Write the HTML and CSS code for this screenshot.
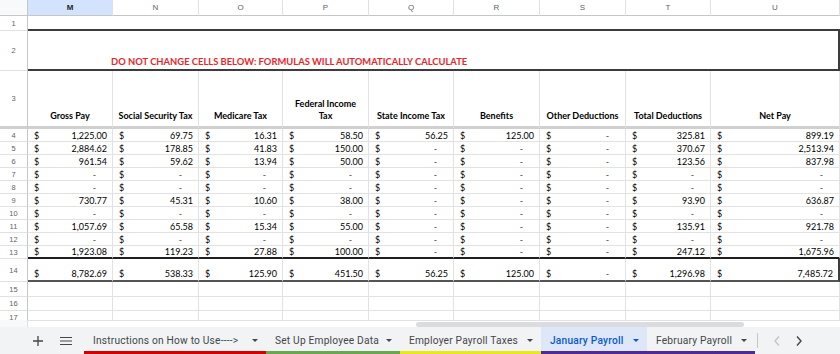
FILE: index.html
```html
<!DOCTYPE html>
<html>
<head>
<meta charset="utf-8">
<link rel="stylesheet" href="styles.css">
</head>
<body>
<div class="sheet">
  <div class="grid">
    <div class="corner"></div>
    <div class="ch sel">M</div><div class="ch">N</div><div class="ch">O</div><div class="ch">P</div><div class="ch">Q</div><div class="ch">R</div><div class="ch">S</div><div class="ch">T</div><div class="ch">U</div>

    <div class="rh">1</div><div class="c r1"></div>
    <div class="rh">2</div><div class="c r2"><span class="warn">DO NOT CHANGE CELLS BELOW: FORMULAS WILL AUTOMATICALLY CALCULATE</span></div>

    <div class="rh r3h">3</div>
    <div class="c hd">Gross Pay</div>
    <div class="c hd">Social Security Tax</div>
    <div class="c hd">Medicare Tax</div>
    <div class="c hd">Federal Income<br>Tax</div>
    <div class="c hd">State Income Tax</div>
    <div class="c hd">Benefits</div>
    <div class="c hd">Other Deductions</div>
    <div class="c hd">Total Deductions</div>
    <div class="c hd">Net Pay</div>

    <div class="rh">4</div>
    <div class="c a"><span>$</span><span>1,225.00</span></div><div class="c a"><span>$</span><span>69.75</span></div><div class="c a"><span>$</span><span>16.31</span></div><div class="c a"><span>$</span><span>58.50</span></div><div class="c a"><span>$</span><span>56.25</span></div><div class="c a"><span>$</span><span>125.00</span></div><div class="c a z"><span>$</span><span>-</span></div><div class="c a"><span>$</span><span>325.81</span></div><div class="c a"><span>$</span><span>899.19</span></div>

    <div class="rh">5</div>
    <div class="c a"><span>$</span><span>2,884.62</span></div><div class="c a"><span>$</span><span>178.85</span></div><div class="c a"><span>$</span><span>41.83</span></div><div class="c a"><span>$</span><span>150.00</span></div><div class="c a z"><span>$</span><span>-</span></div><div class="c a z"><span>$</span><span>-</span></div><div class="c a z"><span>$</span><span>-</span></div><div class="c a"><span>$</span><span>370.67</span></div><div class="c a"><span>$</span><span>2,513.94</span></div>

    <div class="rh">6</div>
    <div class="c a"><span>$</span><span>961.54</span></div><div class="c a"><span>$</span><span>59.62</span></div><div class="c a"><span>$</span><span>13.94</span></div><div class="c a"><span>$</span><span>50.00</span></div><div class="c a z"><span>$</span><span>-</span></div><div class="c a z"><span>$</span><span>-</span></div><div class="c a z"><span>$</span><span>-</span></div><div class="c a"><span>$</span><span>123.56</span></div><div class="c a"><span>$</span><span>837.98</span></div>

    <div class="rh">7</div>
    <div class="c a z"><span>$</span><span>-</span></div><div class="c a z"><span>$</span><span>-</span></div><div class="c a z"><span>$</span><span>-</span></div><div class="c a z"><span>$</span><span>-</span></div><div class="c a z"><span>$</span><span>-</span></div><div class="c a z"><span>$</span><span>-</span></div><div class="c a z"><span>$</span><span>-</span></div><div class="c a z"><span>$</span><span>-</span></div><div class="c a z"><span>$</span><span>-</span></div>

    <div class="rh">8</div>
    <div class="c a z"><span>$</span><span>-</span></div><div class="c a z"><span>$</span><span>-</span></div><div class="c a z"><span>$</span><span>-</span></div><div class="c a z"><span>$</span><span>-</span></div><div class="c a z"><span>$</span><span>-</span></div><div class="c a z"><span>$</span><span>-</span></div><div class="c a z"><span>$</span><span>-</span></div><div class="c a z"><span>$</span><span>-</span></div><div class="c a z"><span>$</span><span>-</span></div>

    <div class="rh">9</div>
    <div class="c a"><span>$</span><span>730.77</span></div><div class="c a"><span>$</span><span>45.31</span></div><div class="c a"><span>$</span><span>10.60</span></div><div class="c a"><span>$</span><span>38.00</span></div><div class="c a z"><span>$</span><span>-</span></div><div class="c a z"><span>$</span><span>-</span></div><div class="c a z"><span>$</span><span>-</span></div><div class="c a"><span>$</span><span>93.90</span></div><div class="c a"><span>$</span><span>636.87</span></div>

    <div class="rh">10</div>
    <div class="c a z"><span>$</span><span>-</span></div><div class="c a z"><span>$</span><span>-</span></div><div class="c a z"><span>$</span><span>-</span></div><div class="c a z"><span>$</span><span>-</span></div><div class="c a z"><span>$</span><span>-</span></div><div class="c a z"><span>$</span><span>-</span></div><div class="c a z"><span>$</span><span>-</span></div><div class="c a z"><span>$</span><span>-</span></div><div class="c a z"><span>$</span><span>-</span></div>

    <div class="rh">11</div>
    <div class="c a"><span>$</span><span>1,057.69</span></div><div class="c a"><span>$</span><span>65.58</span></div><div class="c a"><span>$</span><span>15.34</span></div><div class="c a"><span>$</span><span>55.00</span></div><div class="c a z"><span>$</span><span>-</span></div><div class="c a z"><span>$</span><span>-</span></div><div class="c a z"><span>$</span><span>-</span></div><div class="c a"><span>$</span><span>135.91</span></div><div class="c a"><span>$</span><span>921.78</span></div>

    <div class="rh">12</div>
    <div class="c a z"><span>$</span><span>-</span></div><div class="c a z"><span>$</span><span>-</span></div><div class="c a z"><span>$</span><span>-</span></div><div class="c a z"><span>$</span><span>-</span></div><div class="c a z"><span>$</span><span>-</span></div><div class="c a z"><span>$</span><span>-</span></div><div class="c a z"><span>$</span><span>-</span></div><div class="c a z"><span>$</span><span>-</span></div><div class="c a z"><span>$</span><span>-</span></div>

    <div class="rh">13</div>
    <div class="c a t13"><span>$</span><span>1,923.08</span></div><div class="c a t13"><span>$</span><span>119.23</span></div><div class="c a t13"><span>$</span><span>27.88</span></div><div class="c a t13"><span>$</span><span>100.00</span></div><div class="c a z t13"><span>$</span><span>-</span></div><div class="c a z t13"><span>$</span><span>-</span></div><div class="c a z t13"><span>$</span><span>-</span></div><div class="c a t13"><span>$</span><span>247.12</span></div><div class="c a t13"><span>$</span><span>1,675.96</span></div>

    <div class="rh">14</div>
    <div class="c a tot"><span>$</span><span>8,782.69</span></div><div class="c a tot"><span>$</span><span>538.33</span></div><div class="c a tot"><span>$</span><span>125.90</span></div><div class="c a tot"><span>$</span><span>451.50</span></div><div class="c a tot"><span>$</span><span>56.25</span></div><div class="c a tot"><span>$</span><span>125.00</span></div><div class="c a z tot"><span>$</span><span>-</span></div><div class="c a tot"><span>$</span><span>1,296.98</span></div><div class="c a tot last"><span>$</span><span>7,485.72</span></div>

    <div class="rh">15</div>
    <div class="c"></div><div class="c"></div><div class="c"></div><div class="c"></div><div class="c"></div><div class="c"></div><div class="c"></div><div class="c"></div><div class="c"></div>
    <div class="rh">16</div>
    <div class="c"></div><div class="c"></div><div class="c"></div><div class="c"></div><div class="c"></div><div class="c"></div><div class="c"></div><div class="c"></div><div class="c"></div>
    <div class="rh">17</div>
    <div class="c"></div><div class="c"></div><div class="c"></div><div class="c"></div><div class="c"></div><div class="c"></div><div class="c"></div><div class="c"></div><div class="c"></div>
  </div>
</div>
<div class="scrollband">
  <div class="sb-corner"></div>
  <div class="sb-track"><div class="thumb"></div></div>
</div>
<div class="tabbar">
  <div class="tools">
    <span class="tool"><svg width="12" height="12" viewBox="0 0 12 12"><path d="M6 1v10M1 6h10" stroke="#444746" stroke-width="1.3" fill="none"/></svg></span>
    <span class="tool"><svg width="12" height="10" viewBox="0 0 12 10"><path d="M0 1.5h12M0 5h12M0 8.5h12" stroke="#444746" stroke-width="1.2" fill="none"/></svg></span>
  </div>
  <div class="tab red w1">Instructions on How to Use----&gt;<i class="caret"></i></div>
  <div class="tab green w2">Set Up Employee Data<i class="caret"></i></div>
  <div class="tab yellow w3">Employer Payroll Taxes<i class="caret"></i></div>
  <div class="tab purple active w4">January Payroll<i class="caret"></i></div>
  <div class="tab purple w5">February Payroll<i class="caret"></i></div>
  <div class="sep"></div>
  <div class="nav">
    <svg width="10" height="12" viewBox="0 0 10 12"><path d="M7 1.5L3 6l4 4.5" stroke="#c4c7c5" stroke-width="1.4" fill="none"/></svg>
    <svg width="10" height="12" viewBox="0 0 10 12"><path d="M3 1.5L7 6l-4 4.5" stroke="#444746" stroke-width="1.4" fill="none"/></svg>
  </div>
</div>
</body>
</html>
```
FILE: styles.css
```css
* { box-sizing: border-box; }
html, body { margin: 0; padding: 0; }
body { width: 840px; height: 354px; overflow: hidden; background: #fff; font-family: "Lato", "Open Sans", sans-serif; }

.sheet { height: 320px; overflow: hidden; }
.grid {
  display: grid;
  grid-template-columns: 28px 85px 86px 84px 86px 85px 86px 86px 85px 129px;
  grid-template-rows: 16px 15px 40px 58px repeat(10, 13px) 23px 15px 14px 13px;
}
.corner { background: #f8f9fa; border-right: 1px solid #c4c7c5; border-bottom: 1px solid #c4c7c5; }
.ch {
  display: flex; align-items: center; justify-content: center;
  font-family: "Liberation Sans", Arial, sans-serif; font-size: 8px; color: #5f6368;
  border-right: 1px solid #e1e1e1; border-bottom: 1px solid #c4c7c5; background: #fff;
}
.ch.sel { background: #d3e3fd; color: #1f1f1f; font-weight: bold; }
.rh {
  display: flex; align-items: center; justify-content: center;
  font-family: "Liberation Sans", Arial, sans-serif; font-size: 7.5px; color: #5f6368;
  border-right: 1px solid #c4c7c5; border-bottom: 1px solid #e1e1e1; background: #fff;
}
.rh.r3h { border-bottom: 3px solid #d0d0d0; }

.c {
  border-right: 1px solid #e2e2e2; border-bottom: 1px solid #e2e2e2;
  font-size: 9px; line-height: 11px; color: #000;
  display: flex; align-items: flex-end; justify-content: space-between;
  padding: 0 5px 0 6px; white-space: nowrap; overflow: hidden;
}
.r1 { grid-column: 2 / 11; border-right: none; border-bottom: 2px solid #3c3c3c; }
.r2 { grid-column: 2 / 11; border-right: 2px solid #3c3c3c; border-bottom: 2px solid #3c3c3c; padding-left: 83px; padding-bottom: 2px; justify-content: flex-start; }
.warn { color: #e8262a; font-weight: bold; font-size: 9.4px; }
.hd { font-weight: bold; justify-content: center; text-align: center; padding: 0 3px 4px; border-bottom: 3px solid #d0d0d0; line-height: 12px; }
.a.z span:last-child { padding-right: 11px; color: #444; }
.t13 { border-bottom: 2px solid #1f1f1f; }
.tot { border-bottom: 2px solid #555; padding-bottom: 1px; }
.tot.last { border-right: 2px solid #3c3c3c; }

.scrollband { display: flex; height: 7px; background: #fff; }
.sb-corner { width: 28px; background: #f8f9fa; border-right: 1px solid #e1e1e1; }
.sb-track { flex: 1; position: relative; border-top: 1px solid #e1e1e1; }
.thumb { position: absolute; left: 388px; top: 1px; width: 328px; height: 5px; border-radius: 3px; background: #dadce0; }

.tabbar {
  height: 27px; background: #f1f3f4; display: flex; align-items: stretch;
  font-family: "Roboto", "Liberation Sans", sans-serif; font-size: 10.2px; color: #444746;
}
.tools { width: 84px; display: flex; align-items: center; padding-left: 32px; gap: 16px; }
.tool { display: flex; align-items: center; }
.tab { display: flex; align-items: center; flex: none; padding: 3px 8px 0 9px; border-bottom: 3px solid transparent; letter-spacing: 0.2px; white-space: nowrap; }
.w1 { width: 182px; }
.w2 { width: 134px; }
.w3 { width: 141px; }
.w4 { width: 106px; }
.w5 { width: 108px; }
.caret { display: inline-block; margin-left: auto; width: 0; height: 0; border-left: 3.5px solid transparent; border-right: 3.5px solid transparent; border-top: 3.5px solid #444746; }
.red { border-bottom-color: #d40000; }
.green { border-bottom-color: #6aa84f; }
.yellow { border-bottom-color: #e8e81a; }
.purple { border-bottom-color: #4f2a94; }
.active { background: #dde7f7; color: #0b57d0; font-weight: 500; }
.active .caret { border-top-color: #0b57d0; }
.sep { width: 1px; background: #c4c7c5; margin: 6px 0 6px 2px; }
.nav { display: flex; align-items: center; gap: 12px; padding-left: 14px; }
```
